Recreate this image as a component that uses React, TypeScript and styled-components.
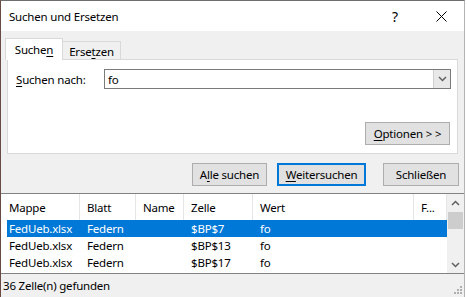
import React from 'react';
import styled, { createGlobalStyle } from 'styled-components';

const Global = createGlobalStyle`
  html, body { margin: 0; padding: 0; background: #ffffff; }
  body {
    font-family: "Noto Sans", "Segoe UI", sans-serif;
    font-size: 11.5px;
    letter-spacing: -0.2px;
    color: #000;
  }
  * { box-sizing: border-box; }
`;

const Window = styled.div`
  width: 465px;
  height: 297px;
  display: flex;
  flex-direction: column;
  background: #f0f0f0;
  border-top: 1px solid #6e6e6e;
  border-left: 1px solid #6a4a44;
  border-right: 1px solid #b4b4b4;
  overflow: hidden;
`;

const TitleBar = styled.div`
  height: 30px;
  flex-shrink: 0;
  background: #ffffff;
  display: flex;
  align-items: center;
`;

const Title = styled.div`
  flex: 1;
  padding-left: 8px;
  font-size: 11.5px;
`;

const CaptionButton = styled.div`
  width: 46px;
  height: 30px;
  display: flex;
  align-items: center;
  justify-content: center;
  font-size: 14px;
  color: #000;
`;

const Body = styled.div`
  padding-top: 7px;
  display: flex;
  flex-direction: column;
`;

const TabStrip = styled.div`
  display: flex;
  align-items: flex-end;
  height: 22px;
  margin-left: 4px;
  position: relative;
  z-index: 1;
`;

const Tab = styled.div<{ $active?: boolean }>`
  width: 58px;
  height: ${p => (p.$active ? 22 : 18)}px;
  margin-bottom: ${p => (p.$active ? 0 : 1)}px;
  background: ${p => (p.$active ? '#ffffff' : '#f0f0f0')};
  border: 1px solid #d9d9d9;
  border-bottom: none;
  border-left: ${p => (p.$active ? '1px solid #d9d9d9' : 'none')};
  display: flex;
  align-items: center;
  justify-content: center;
  padding-top: ${p => (p.$active ? 0 : 1)}px;
`;

const Panel = styled.div`
  margin: -1px 6px 0 6px;
  height: 95px;
  background: #ffffff;
  border: 1px solid #d9d9d9;
  padding: 9px 6px 8px 8px;
  display: flex;
  flex-direction: column;
`;

const FieldRow = styled.div`
  display: flex;
  align-items: center;
`;

const Label = styled.div`
  width: 88px;
`;

const Combo = styled.div`
  width: 347px;
  height: 20px;
  border: 1px solid #7a7a7a;
  display: flex;
  align-items: center;
  background: #fff;
`;

const ComboText = styled.div`
  flex: 1;
  padding-left: 3px;
`;

const ComboButton = styled.div`
  width: 17px;
  height: 18px;
  background: #e8e8e8;
  border-left: 1px solid #cfcfcf;
  display: flex;
  align-items: center;
  justify-content: center;
`;

const PanelFooter = styled.div`
  margin-top: auto;
  display: flex;
  justify-content: flex-end;
  padding-right: 1px;
`;

const Button = styled.div<{ $w: number; $focused?: boolean }>`
  width: ${p => p.$w}px;
  height: 23px;
  background: #e1e1e1;
  border: ${p => (p.$focused ? '2px solid #0078d7' : '1px solid #adadad')};
  display: flex;
  align-items: center;
  justify-content: center;
`;

const ButtonRow = styled.div`
  margin-top: 9px;
  display: flex;
  justify-content: flex-end;
  padding-right: 5px;
`;

const Gap = styled.div<{ $w: number }>`
  width: ${p => p.$w}px;
`;

const Mn = styled.span`
  text-decoration: underline;
  text-underline-offset: 2px;
`;

const List = styled.div`
  margin-top: 7px;
  height: 81px;
  background: #fff;
  border-top: 1px solid #828282;
  border-bottom: 1px solid #828282;
  display: flex;
`;

const ListMain = styled.div`
  flex: 1;
  padding-left: 1px;
  display: flex;
  flex-direction: column;
`;

const Header = styled.div`
  height: 26px;
  display: grid;
  grid-template-columns: 78px 56px 48px 69px 161px 33px;
`;

const HeadCell = styled.div`
  border-right: 1px solid #e5e5e5;
  padding-left: 7px;
  display: flex;
  align-items: center;
  white-space: nowrap;
`;

const Row = styled.div<{ $selected?: boolean }>`
  margin-left: 5px;
  height: 17px;
  display: grid;
  grid-template-columns: 73px 56px 48px 69px 161px 33px;
  align-items: center;
  background: ${p => (p.$selected ? '#0078d7' : 'transparent')};
  color: ${p => (p.$selected ? '#ffffff' : '#000')};
`;

const Cell = styled.div<{ $first?: boolean }>`
  padding-left: ${p => (p.$first ? 2 : 7)}px;
  white-space: nowrap;
`;

const Scrollbar = styled.div`
  width: 17px;
  background: #f0f0f0;
  display: flex;
  flex-direction: column;
  align-items: center;
`;

const ScrollArrow = styled.div`
  width: 17px;
  height: 17px;
  display: flex;
  align-items: center;
  justify-content: center;
`;

const Thumb = styled.div`
  width: 15px;
  height: 17px;
  margin-top: 1px;
  background: #cdcdcd;
`;

const Spacer = styled.div`
  flex: 1;
`;

const StatusBar = styled.div`
  flex: 1;
  display: flex;
  align-items: center;
  padding-left: 2px;
  position: relative;
`;

const Grip = styled.svg`
  position: absolute;
  right: 2px;
  bottom: 3px;
`;

const Chevron = ({ up }: { up?: boolean }) => (
  <svg width="9" height="6" viewBox="0 0 9 6">
    <path d={up ? 'M1 5 L4.5 1.5 L8 5' : 'M1 1 L4.5 4.5 L8 1'} fill="none" stroke="#606060" strokeWidth="1.5" />
  </svg>
);

const cols = ['Mappe', 'Blatt', 'Name', 'Zelle', 'Wert', 'F...'];
const rows = [
  ['FedUeb.xlsx', 'Federn', '', '$BP$7', 'fo', ''],
  ['FedUeb.xlsx', 'Federn', '', '$BP$13', 'fo', ''],
  ['FedUeb.xlsx', 'Federn', '', '$BP$17', 'fo', ''],
];

export default function App() {
  return (
    <>
      <Global />
      <Window>
        <TitleBar>
          <Title>Suchen und Ersetzen</Title>
          <CaptionButton>?</CaptionButton>
          <CaptionButton>
            <svg width="11" height="11" viewBox="0 0 11 11">
              <path d="M0.5 0.5 L10.5 10.5 M10.5 0.5 L0.5 10.5" stroke="#000" strokeWidth="1" />
            </svg>
          </CaptionButton>
        </TitleBar>
        <Body>
          <TabStrip>
            <Tab $active>Suche<Mn>n</Mn></Tab>
            <Tab>Erse<Mn>t</Mn>zen</Tab>
          </TabStrip>
          <Panel>
            <FieldRow>
              <Label><Mn>S</Mn>uchen nach:</Label>
              <Combo>
                <ComboText>fo</ComboText>
                <ComboButton><Chevron /></ComboButton>
              </Combo>
            </FieldRow>
            <PanelFooter>
              <Button $w={85}><span><Mn>O</Mn>ptionen &gt; &gt;</span></Button>
            </PanelFooter>
          </Panel>
          <ButtonRow>
            <Button $w={75}><span>A<Mn>l</Mn>le suchen</span></Button>
            <Gap $w={10} />
            <Button $w={89} $focused><span><Mn>W</Mn>eitersuchen</span></Button>
            <Gap $w={17} />
            <Button $w={76}>Schließen</Button>
          </ButtonRow>
        </Body>
        <List>
          <ListMain>
            <Header>
              {cols.map(c => <HeadCell key={c}>{c}</HeadCell>)}
            </Header>
            {rows.map((r, i) => (
              <Row key={i} $selected={i === 0}>
                {r.map((c, j) => <Cell key={j} $first={j === 0}>{c}</Cell>)}
              </Row>
            ))}
          </ListMain>
          <Scrollbar>
            <ScrollArrow><Chevron up /></ScrollArrow>
            <Thumb />
            <Spacer />
            <ScrollArrow><Chevron /></ScrollArrow>
          </Scrollbar>
        </List>
        <StatusBar>
          36 Zelle(n) gefunden
          <Grip width="8" height="8" viewBox="0 0 8 8">
            <rect x="6" y="0" width="2" height="2" fill="#b0b0b0" />
            <rect x="3" y="3" width="2" height="2" fill="#b0b0b0" />
            <rect x="6" y="3" width="2" height="2" fill="#b0b0b0" />
            <rect x="0" y="6" width="2" height="2" fill="#b0b0b0" />
            <rect x="3" y="6" width="2" height="2" fill="#b0b0b0" />
            <rect x="6" y="6" width="2" height="2" fill="#b0b0b0" />
          </Grip>
        </StatusBar>
      </Window>
    </>
  );
}
